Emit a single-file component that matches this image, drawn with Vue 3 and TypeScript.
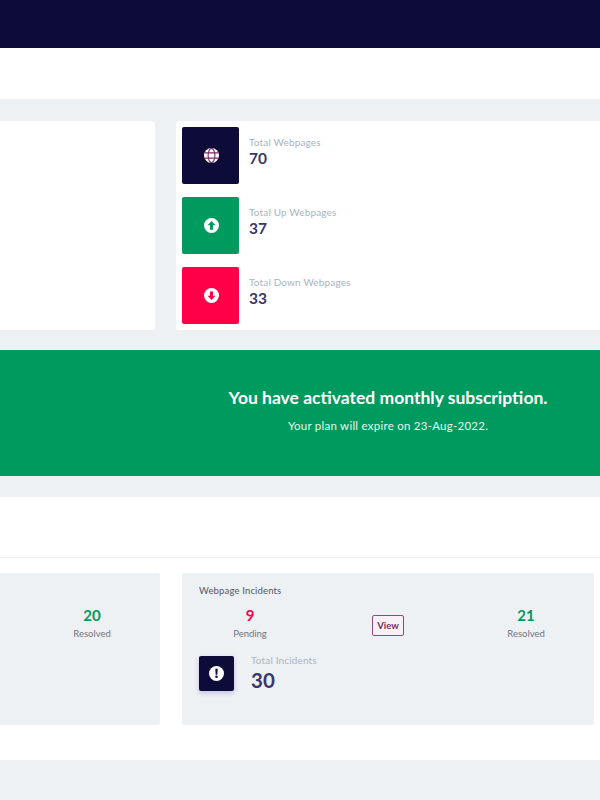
<script setup lang="ts">
interface Stat { label: string; value: number; tone: string; kind: 'globe' | 'up' | 'down' }
const stats: Stat[] = [
  { label: 'Total Webpages', value: 70, tone: 'navy', kind: 'globe' },
  { label: 'Total Up Webpages', value: 37, tone: 'green', kind: 'up' },
  { label: 'Total Down Webpages', value: 33, tone: 'red', kind: 'down' },
]
</script>

<template>
  <div class="page">
    <header class="topbar"></header>
    <div class="subbar"></div>
    <main class="main">
      <section class="cards">
        <div class="card"></div>
        <div class="card stats">
          <div v-for="s in stats" :key="s.label" class="stat">
            <div class="tile" :class="s.tone">
              <svg v-if="s.kind === 'globe'" viewBox="0 0 16 16" width="15" height="15">
                <circle cx="8" cy="8" r="8" fill="#fff" />
                <g fill="none" stroke="#7a2c62" stroke-width="1.2">
                  <ellipse cx="8" cy="8" rx="3.6" ry="7.6" />
                  <path d="M0.5 5.2H15.5M0.5 10.8H15.5" />
                </g>
              </svg>
              <svg v-else-if="s.kind === 'up'" viewBox="0 0 16 16" width="15" height="15">
                <circle cx="8" cy="8" r="8" fill="#fff" />
                <path d="M8 3.2 12.2 7.8H9.6V12.4H6.4V7.8H3.8Z" fill="#019a5e" />
              </svg>
              <svg v-else viewBox="0 0 16 16" width="15" height="15">
                <circle cx="8" cy="8" r="8" fill="#fff" />
                <path d="M8 12.8 3.8 8.2H6.4V3.6H9.6V8.2H12.2Z" fill="#ff0048" />
              </svg>
            </div>
            <div class="stat-text">
              <div class="stat-label">{{ s.label }}</div>
              <div class="stat-value">{{ s.value }}</div>
            </div>
          </div>
        </div>
      </section>

      <section class="banner">
        <div class="banner-text">
          <h2>You have activated monthly subscription.</h2>
          <p>Your plan will expire on 23-Aug-2022.</p>
        </div>
      </section>

      <section class="incidents">
        <div class="incidents-head"></div>
        <div class="panels">
          <div class="panel">
            <div class="panel-row left-row">
              <div class="metric">
                <div class="metric-value ok">20</div>
                <div class="metric-label">Resolved</div>
              </div>
            </div>
          </div>
          <div class="panel">
            <div class="panel-title">Webpage Incidents</div>
            <div class="panel-row">
              <div class="metric">
                <div class="metric-value bad">9</div>
                <div class="metric-label">Pending</div>
              </div>
              <button class="view" type="button">View</button>
              <div class="metric">
                <div class="metric-value ok">21</div>
                <div class="metric-label">Resolved</div>
              </div>
            </div>
            <div class="total">
              <div class="total-icon">
                <svg viewBox="0 0 16 16" width="15" height="15">
                  <circle cx="8" cy="8" r="8" fill="#fff" />
                  <path d="M6.7 3h2.6l-.4 6.2H7.1Z" fill="#0d0b38" />
                  <circle cx="8" cy="11.5" r="1.4" fill="#0d0b38" />
                </svg>
              </div>
              <div class="total-text">
                <div class="total-label">Total Incidents</div>
                <div class="total-value">30</div>
              </div>
            </div>
          </div>
        </div>
      </section>
    </main>
  </div>
</template>

<style scoped>
.page {
  width: 600px;
  height: 800px;
  overflow: hidden;
  background: #eef1f4;
  font-family: Lato, "Noto Sans", sans-serif;
}
.topbar { height: 48px; background: #0d0b38; }
.subbar { height: 51px; background: #fff; }
.main { padding-top: 22px; }
.cards {
  display: grid;
  grid-template-columns: 155px 424px;
  column-gap: 21px;
  height: 209px;
}
.card { background: #fff; border-radius: 0 3px 3px 0; }
.stats {
  border-radius: 3px 0 0 3px;
  padding: 6px 0 0 6px;
  display: flex;
  flex-direction: column;
  gap: 13.5px;
}
.stat { display: flex; align-items: flex-start; gap: 10.5px; }
.tile {
  box-sizing: border-box;
  width: 56.5px;
  height: 56.5px;
  padding-left: 2px;
  border-radius: 2px;
  display: flex;
  align-items: center;
  justify-content: center;
  flex: none;
}
.navy { background: #0d0b38; }
.green { background: #019a5e; }
.red { background: #ff0048; }
.stat-text { padding-top: 9px; }
.stat-label {
  font-size: 10px;
  line-height: 13px;
  color: #a9b4bf;
  letter-spacing: 0.15px;
}
.stat-value {
  font-size: 15.5px;
  line-height: 19px;
  font-weight: 700;
  color: #3a3768;
}
.banner {
  margin-top: 20px;
  height: 126px;
  background: #019a5e;
  padding-left: 176px;
  color: #fff;
}
.banner-text { width: 424px; text-align: center; padding-top: 36px; }
.banner h2 {
  margin: 0;
  font-size: 17.5px;
  line-height: 24px;
  font-weight: 700;
  white-space: nowrap;
}
.banner p {
  margin: 8px 0 0;
  font-size: 11.5px;
  line-height: 16px;
  letter-spacing: 0.25px;
  color: #e6f5ee;
}
.incidents {
  margin-top: 21px;
  height: 263px;
  background: #fff;
}
.incidents-head { height: 60px; border-bottom: 1px solid #f2f3f5; }
.panels {
  display: grid;
  grid-template-columns: 160px 412px;
  column-gap: 22px;
  padding-top: 15px;
}
.panel {
  box-sizing: border-box;
  height: 152px;
  background: #eef1f4;
  border-radius: 0 2px 2px 0;
  padding: 11px 17px 0;
}
.panel + .panel { border-radius: 2px; }
.panel-title {
  font-size: 9.5px;
  line-height: 13px;
  letter-spacing: 0.15px;
  color: #55555f;
}
.panel-row {
  display: grid;
  grid-template-columns: 102px 1fr 102px;
  align-items: center;
  justify-items: center;
  margin-top: 9px;
}
.left-row { grid-template-columns: 1fr 102px; margin-top: 22px; }
.left-row .metric { grid-column: 2; }
.metric { text-align: center; width: 100%; }
.metric-value {
  font-size: 15px;
  line-height: 19px;
  font-weight: 700;
}
.ok { color: #019a5e; }
.bad { color: #ff0048; }
.metric-label {
  font-size: 9.5px;
  line-height: 14px;
  margin-top: 2px;
  color: #6f7480;
}
.view {
  width: 32px;
  height: 21px;
  margin-top: 4px;
  padding: 0;
  border: 1px solid #8f4a7a;
  border-radius: 2px;
  background: #f6f1f5;
  color: #7c2a5f;
  font-family: inherit;
  font-size: 9.5px;
  font-weight: 700;
}
.total { display: flex; gap: 17px; margin-top: 15px; }
.total-icon {
  width: 35px;
  height: 35px;
  border-radius: 2px;
  background: #0d0b38;
  box-shadow: 0 2px 5px rgba(90, 70, 200, 0.3);
  display: flex;
  align-items: center;
  justify-content: center;
}
.total-label {
  font-size: 10px;
  line-height: 13px;
  margin-top: -2px;
  color: #a9b4bf;
  letter-spacing: 0.15px;
}
.total-value {
  font-size: 20.5px;
  line-height: 26px;
  font-weight: 700;
  color: #3a3768;
}
</style>
